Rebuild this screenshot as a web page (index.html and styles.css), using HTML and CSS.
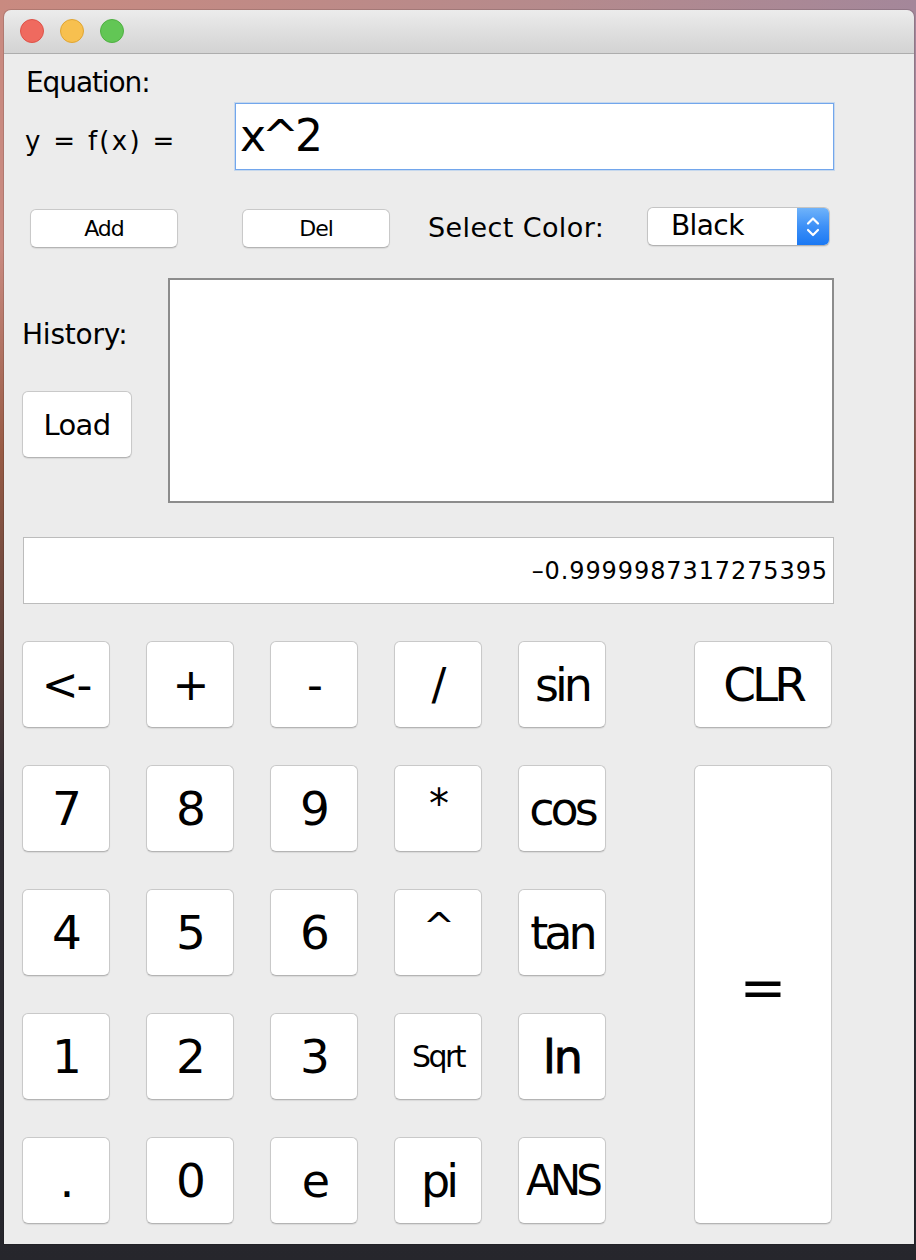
FILE: index.html
```html
<!DOCTYPE html>
<html>
<head>
<meta charset="utf-8">
<link rel="stylesheet" href="styles.css">
</head>
<body>
<div class="window">
  <div class="titlebar">
    <span class="light red"></span>
    <span class="light yellow"></span>
    <span class="light green"></span>
  </div>
  <div class="content">
    <div class="eq-label">Equation:</div>
    <div class="eq-row">
      <span class="fx">y = f(x) =</span>
      <div class="field">x^2</div>
    </div>
    <div class="ctrl-row">
      <div class="btn small add">Add</div>
      <div class="btn small del">Del</div>
      <span class="sel-label">Select Color:</span>
      <div class="combo">
        <span class="combo-text">Black</span>
        <span class="combo-arrow">
          <svg width="32" height="39" viewBox="0 0 32 39">
            <path d="M11 16.5 L16 11.5 L21 16.5" fill="none" stroke="#fff" stroke-width="2.2" stroke-linecap="round" stroke-linejoin="round"/>
            <path d="M11 23 L16 28 L21 23" fill="none" stroke="#fff" stroke-width="2.2" stroke-linecap="round" stroke-linejoin="round"/>
          </svg>
        </span>
      </div>
    </div>
    <div class="hist-row">
      <div class="hist-side">
        <div class="hist-label">History:</div>
        <div class="btn load">Load</div>
      </div>
      <div class="hist-list"></div>
    </div>
    <div class="display">–0.9999987317275395</div>
    <div class="keypad">
      <div class="btn key sym">&lt;-</div>
      <div class="btn key sym">+</div>
      <div class="btn key sym">-</div>
      <div class="btn key sym">/</div>
      <div class="btn key word">sin</div>
      <div class="gap-cell"></div>
      <div class="btn key clr">CLR</div>

      <div class="btn key">7</div>
      <div class="btn key">8</div>
      <div class="btn key">9</div>
      <div class="btn key sym star">*</div>
      <div class="btn key word">cos</div>
      <div class="gap-cell"></div>
      <div class="btn key equals">=</div>

      <div class="btn key">4</div>
      <div class="btn key">5</div>
      <div class="btn key">6</div>
      <div class="btn key sym caret">^</div>
      <div class="btn key word">tan</div>
      <div class="gap-cell"></div>

      <div class="btn key">1</div>
      <div class="btn key">2</div>
      <div class="btn key">3</div>
      <div class="btn key sqrt">Sqrt</div>
      <div class="btn key ln">ln</div>
      <div class="gap-cell"></div>

      <div class="btn key">.</div>
      <div class="btn key">0</div>
      <div class="btn key word">e</div>
      <div class="btn key word">pi</div>
      <div class="btn key ans">ANS</div>
      <div class="gap-cell"></div>
    </div>
  </div>
</div>
</body>
</html>
```

FILE: styles.css
```css
* { box-sizing: border-box; }

html, body {
  margin: 0;
  padding: 0;
}

body {
  width: 916px;
  height: 1260px;
  overflow: hidden;
  font-family: "DejaVu Sans", "Liberation Sans", sans-serif;
  color: #000;
  background:
    linear-gradient(to right, #c98a80 0%, #b58a8c 60%, #a4879a 100%);
  position: relative;
}

body::before {
  content: "";
  position: absolute;
  left: 0;
  right: 0;
  top: 0;
  bottom: 0;
  background: linear-gradient(to bottom, rgba(0,0,0,0) 0, rgba(0,0,0,0) 250px, rgba(120,60,30,0.6) 450px, rgba(40,40,48,0.95) 800px, #26262c 1260px);
}

.window {
  position: relative;
  margin: 10px 0 0 4px;
  width: 910px;
  height: 1234px;
  display: flex;
  flex-direction: column;
  border-radius: 7px 7px 0 0;
  overflow: hidden;
  box-shadow: 0 0 0 1px rgba(0,0,0,0.12);
}

.titlebar {
  height: 44px;
  flex: none;
  display: flex;
  align-items: center;
  gap: 16px;
  padding-left: 16px;
  background: linear-gradient(to bottom, #ececec 0%, #dfdfdf 50%, #d3d3d3 100%);
  border-bottom: 1px solid #adadad;
}

.light {
  width: 24px;
  height: 24px;
  border-radius: 50%;
  display: block;
  margin-top: -2px;
}
.red { background: #ef6a5f; border: 1px solid #de5248; }
.yellow { background: #f7c04f; border: 1px solid #e0a532; }
.green { background: #62c655; border: 1px solid #4fb041; }

.content {
  flex: 1;
  background: #ececec;
  padding: 0 80px 0 18px;
  display: flex;
  flex-direction: column;
}

.eq-label {
  margin-top: 12px;
  height: 34px;
  line-height: 34px;
  padding-left: 4px;
  font-size: 28px;
  letter-spacing: -1.1px;
}

.eq-row {
  margin-top: 3px;
  height: 67px;
  display: flex;
  align-items: center;
  justify-content: space-between;
}

.fx {
  padding-left: 3px;
  padding-top: 8px;
  font-size: 26px;
  letter-spacing: 2.3px;
}

.field {
  width: 599px;
  height: 67px;
  background: #fff;
  border: 1px solid #72a6ec;
  box-shadow: 0 0 0 1px rgba(130,180,240,0.35);
  font-size: 44px;
  line-height: 64px;
  padding-left: 4px;
  letter-spacing: -4px;
}

.btn {
  background: #fff;
  border: 1px solid #c9c9c9;
  border-bottom-color: #b4b4b4;
  border-radius: 6px;
  box-shadow: 0 1px 1px rgba(0,0,0,0.08);
  display: flex;
  align-items: center;
  justify-content: center;
}

.ctrl-row {
  margin-top: 37px;
  height: 41px;
  display: flex;
  align-items: center;
}

.small {
  width: 148px;
  height: 39px;
  font-size: 22px;
  letter-spacing: -1px;
  margin-top: 2px;
}
.add { margin-left: 8px; }
.del { margin-left: 64px; }

.sel-label {
  margin-left: 38px;
  font-size: 27px;
  letter-spacing: 0.4px;
}

.combo {
  margin-left: auto;
  margin-right: 4px;
  width: 183px;
  height: 39px;
  margin-top: -2px;
  display: flex;
  background: #fff;
  border: 1px solid #c4c4c4;
  border-bottom-color: #b2b2b2;
  border-radius: 6px;
  box-shadow: 0 1px 1px rgba(0,0,0,0.08);
  overflow: hidden;
}

.combo-text {
  flex: 1;
  padding-left: 23px;
  font-size: 28px;
  line-height: 36px;
  letter-spacing: -0.6px;
}

.combo-arrow {
  width: 32px;
  display: flex;
  align-items: center;
  justify-content: center;
  background: linear-gradient(to bottom, #6fb3fa 0%, #3d90f7 50%, #1a78f3 100%);
}
.combo-arrow svg { display: block; }

.hist-row {
  margin-top: 30px;
  height: 225px;
  display: flex;
}

.hist-side {
  width: 146px;
  display: flex;
  flex-direction: column;
}

.hist-label {
  margin-top: 40px;
  height: 34px;
  line-height: 34px;
  font-size: 28px;
  letter-spacing: -0.2px;
}

.load {
  margin-top: 39px;
  width: 110px;
  height: 67px;
  font-size: 29px;
  letter-spacing: -0.6px;
}

.hist-list {
  width: 666px;
  height: 225px;
  background: #fff;
  border: 2px solid #8c8c8c;
}

.display {
  margin-top: 34px;
  margin-left: 1px;
  width: 811px;
  height: 67px;
  background: #fff;
  border: 1px solid #bcbcbc;
  text-align: right;
  padding-right: 5px;
  padding-top: 16px;
  font-size: 24px;
  line-height: 34px;
  letter-spacing: 0.9px;
}

.keypad {
  margin-top: 37px;
  display: grid;
  grid-template-columns: 88px 88px 88px 88px 88px 16px 138px;
  grid-template-rows: repeat(5, 87px);
  column-gap: 36px;
  row-gap: 37px;
}

.key {
  font-size: 47px;
  letter-spacing: -2px;
  line-height: 1;
}

.key.word { letter-spacing: -4px; font-size: 46px; }
.key.sym { font-size: 44px; }
.key.star { font-size: 40px; padding-bottom: 10px; }
.key.caret { font-size: 38px; padding-bottom: 14px; }
.key.sqrt { font-size: 30px; letter-spacing: -2.5px; }
.key.ln { font-size: 46px; letter-spacing: -2px; -webkit-text-stroke: 0.9px #000; }
.key.ans { font-size: 42px; letter-spacing: -5px; }
.key.clr { font-size: 47px; letter-spacing: -4px; }
.key.equals { grid-column: 7; grid-row: 2 / 6; font-size: 56px; letter-spacing: 0; padding-bottom: 14px; }

.gap-cell { }
```
